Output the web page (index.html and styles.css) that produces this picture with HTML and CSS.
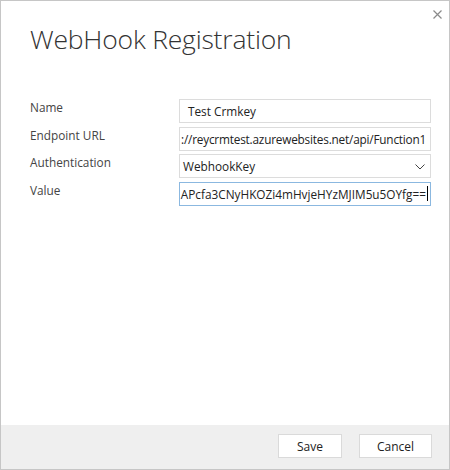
FILE: index.html
```html
<!DOCTYPE html>
<html>
<head>
<meta charset="utf-8">
<link rel="stylesheet" href="styles.css">
</head>
<body>
<div class="dialog">
  <div class="close" aria-label="Close">
    <svg width="9" height="9" viewBox="0 0 9 9"><path d="M0.5 0.5 L8.5 8.5 M8.5 0.5 L0.5 8.5" stroke="#8a8a8a" stroke-width="1.2" fill="none"/></svg>
  </div>
  <div class="main">
    <h1 class="title">WebHook Registration</h1>
    <div class="form">
      <label class="label">Name</label>
      <div class="field"><span class="text pad">Test Crmkey</span></div>
      <label class="label">Endpoint URL</label>
      <div class="field"><span class="text url">://reycrmtest.azurewebsites.net/api/Function1</span></div>
      <label class="label">Authentication</label>
      <div class="field select"><span class="text">WebhookKey</span>
        <svg class="chev" width="10" height="6" viewBox="0 0 10 6"><path d="M0.5 0.5 L5 5 L9.5 0.5" stroke="#444" stroke-width="1" fill="none"/></svg>
      </div>
      <label class="label">Value</label>
      <div class="field focus"><span class="text value">APcfa3CNyHKOZi4mHvjeHYzMJIM5u5OYfg==</span><span class="caret"></span></div>
    </div>
  </div>
  <div class="footer">
    <button class="btn save">Save</button>
    <button class="btn cancel">Cancel</button>
  </div>
</div>
</body>
</html>
```
FILE: styles.css
```css
* { box-sizing: border-box; }
html, body { margin: 0; padding: 0; background: #fff; }
body { font-family: "Segoe UI", "Open Sans", "Noto Sans", sans-serif; }
.dialog {
  position: relative;
  width: 450px;
  height: 470px;
  border: 1px solid #c6c6c6;
  display: flex;
  flex-direction: column;
  background: #fff;
}
.close {
  position: absolute;
  top: 9px;
  left: 432px;
  width: 9px;
  height: 9px;
  line-height: 0;
}
.main {
  flex: 1;
  padding: 18px 18px 0 29px;
}
.title {
  margin: 0;
  font-family: "Open Sans", sans-serif;
  font-weight: 300;
  font-size: 26.5px;
  line-height: 40px;
  color: #333;
  letter-spacing: -0.2px;
}
.form {
  margin-top: 40px;
  display: grid;
  grid-template-columns: 149px 252px;
  grid-auto-rows: 24px;
  row-gap: 3.5px;
}
.label {
  font-size: 11.8px;
  color: #444;
  line-height: 16px;
}
.field {
  position: relative;
  border: 1px solid #dcdcdc;
  height: 24px;
  overflow: hidden;
  white-space: nowrap;
  font-size: 11.8px;
  color: #222;
  line-height: 22px;
  display: flex;
  align-items: center;
}
.text { padding-left: 2px; }
.text.pad { padding-left: 8px; }
.text.url { letter-spacing: -0.2px; padding-left: 1px; }
.select .text { padding-left: 3px; }
.chev { position: absolute; right: 5px; top: 9px; }
.focus { border-color: #8bb8e0; justify-content: flex-end; padding-right: 2px; }
.value { padding-left: 0; }
.caret { width: 1px; height: 15px; background: #000; margin-left: 1px; flex: none; }
.footer {
  height: 44px;
  background: #efefef;
  display: flex;
  justify-content: flex-end;
  align-items: flex-start;
  padding: 9px 17px 0 0;
  gap: 17px;
}
.btn {
  height: 24px;
  background: #fff;
  border: 1px solid #dadada;
  font-family: "Segoe UI", "Open Sans", sans-serif;
  font-size: 12px;
  color: #222;
  padding: 0;
}
.save { width: 64px; }
.cancel { width: 73px; }
```
